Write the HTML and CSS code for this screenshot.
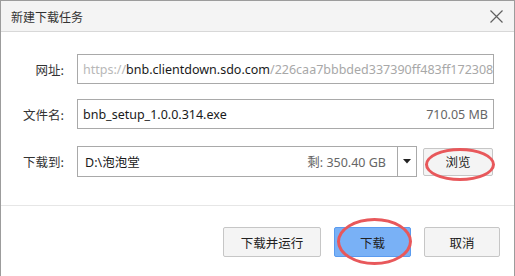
FILE: index.html
```html
<!DOCTYPE html>
<html lang="zh-CN">
<head>
<meta charset="utf-8">
<title>新建下载任务</title>
<link rel="stylesheet" href="styles.css">
</head>
<body>
<div class="dialog">
  <div class="titlebar">
    <span class="title">新建下载任务</span>
    <span class="close" aria-label="关闭">
      <svg width="13" height="13" viewBox="0 0 13 13"><path d="M0.5 0.5 L12.5 12.5 M12.5 0.5 L0.5 12.5" stroke="#606060" stroke-width="1.2" fill="none"/></svg>
    </span>
  </div>
  <div class="form">
    <div class="row row-url">
      <span class="lbl">网址:</span>
      <div class="field"><span class="muted">https://</span><span class="host">bnb.clientdown.sdo.com</span><span class="muted2">/226caa7bbbded337390ff483ff172308/</span></div>
    </div>
    <div class="row row-name">
      <span class="lbl">文件名:</span>
      <div class="field split"><span class="val">bnb_setup_1.0.0.314.exe</span><span class="size">710.05 MB</span></div>
    </div>
    <div class="row row-dir">
      <span class="lbl">下载到:</span>
      <div class="dirline">
        <div class="combo">
          <div class="field-in split"><span class="val dirval">D:\泡泡堂</span><span class="size">剩: 350.40 GB</span></div>
          <span class="drop"><svg width="8" height="5" viewBox="0 0 8 5"><path d="M0 0 H8 L4 4.5 Z" fill="#222"/></svg></span>
        </div>
        <span class="btn-wrap">
          <button class="btn browse">浏览</button>
          <span class="ring ring-browse"></span>
        </span>
      </div>
    </div>
  </div>
  <div class="footer">
    <button class="btn run">下载并运行</button>
    <span class="btn-wrap">
      <button class="btn primary">下载</button>
      <span class="ring ring-dl"></span>
    </span>
    <button class="btn cancel">取消</button>
  </div>
</div>
</body>
</html>
```
FILE: styles.css
```css
html, body {
  margin: 0;
  padding: 0;
  background: #fff;
}
.dialog {
  width: 515px;
  height: 276px;
  box-sizing: border-box;
  border: 1px solid #9c9c9c;
  border-bottom: none;
  background: #fff;
  font-family: "Noto Sans", "Noto Sans CJK SC", sans-serif;
  color: #333;
}
.titlebar {
  height: 30px;
  background: #f4f4f4;
  border-bottom: 1px solid #d8d8d8;
  display: flex;
  align-items: center;
  justify-content: space-between;
  padding: 0 11px 0 10px;
}
.title {
  font-family: "Noto Sans CJK SC", sans-serif;
  font-size: 12px;
  color: #333;
}
.close {
  display: flex;
  width: 13px;
  height: 13px;
}
.form {
  padding: 22px 20px 0 0;
}
.row {
  display: grid;
  grid-template-columns: 63px 1fr;
  column-gap: 13px;
  align-items: center;
  height: 30px;
}
.row-name { margin-top: 15px; }
.row-dir { margin-top: 17px; height: 31px; }
.lbl {
  text-align: right;
  font-family: "Noto Sans CJK SC", sans-serif;
  font-size: 12.5px;
  color: #333;
}
.field {
  height: 30px;
  box-sizing: border-box;
  border: 1px solid #a9a9a9;
  display: flex;
  align-items: center;
  padding: 0 5px 0 5px;
  white-space: nowrap;
  overflow: hidden;
  font-size: 12.5px;
  color: #1a1a1a;
}
.muted { color: #b8b8b8; }
.muted2 { color: #a8a8a8; }
.host { color: #1a1a1a; }
.split { justify-content: space-between; }
.size { color: #666; }
.dirline {
  display: flex;
  align-items: center;
  height: 31px;
}
.combo {
  width: 340px;
  height: 31px;
  box-sizing: border-box;
  border: 1px solid #a9a9a9;
  display: flex;
}
.field-in {
  flex: 1;
  display: flex;
  align-items: center;
  padding: 0 11px 0 7px;
  font-size: 12.5px;
  color: #1a1a1a;
}
.dirval { font-family: "Noto Sans", "Noto Sans CJK SC", sans-serif; }
.drop {
  width: 18px;
  border-left: 1px solid #a9a9a9;
  display: flex;
  align-items: center;
  justify-content: center;
}
.btn-wrap {
  position: relative;
  display: flex;
}
.dirline .btn-wrap { margin-left: 6px; }
.btn {
  height: 30px;
  box-sizing: border-box;
  border: 1px solid #c6c6c6;
  border-radius: 2px;
  background: #f4f4f4;
  font-family: "Noto Sans CJK SC", sans-serif;
  font-size: 12.5px;
  color: #222;
  padding: 0;
  margin: 0;
}
.browse { width: 70px; height: 28px; }
.footer {
  margin-top: 28px;
  border-top: 1px solid #e6e6e6;
  display: flex;
  justify-content: flex-end;
  gap: 13px;
  padding: 21px 14px 0 0;
}
.run { width: 98px; }
.primary {
  width: 77px;
  background: #79b1f6;
  border-color: #5a9bef;
}
.cancel { width: 76px; }
.ring {
  position: absolute;
  box-sizing: border-box;
  border: 3px solid #e8585b;
  border-radius: 50%;
  pointer-events: none;
}
.ring-browse {
  left: 2px;
  top: 0;
  width: 70px;
  height: 33px;
}
.ring-dl {
  left: 3px;
  top: -9px;
  width: 75px;
  height: 47px;
}
```
